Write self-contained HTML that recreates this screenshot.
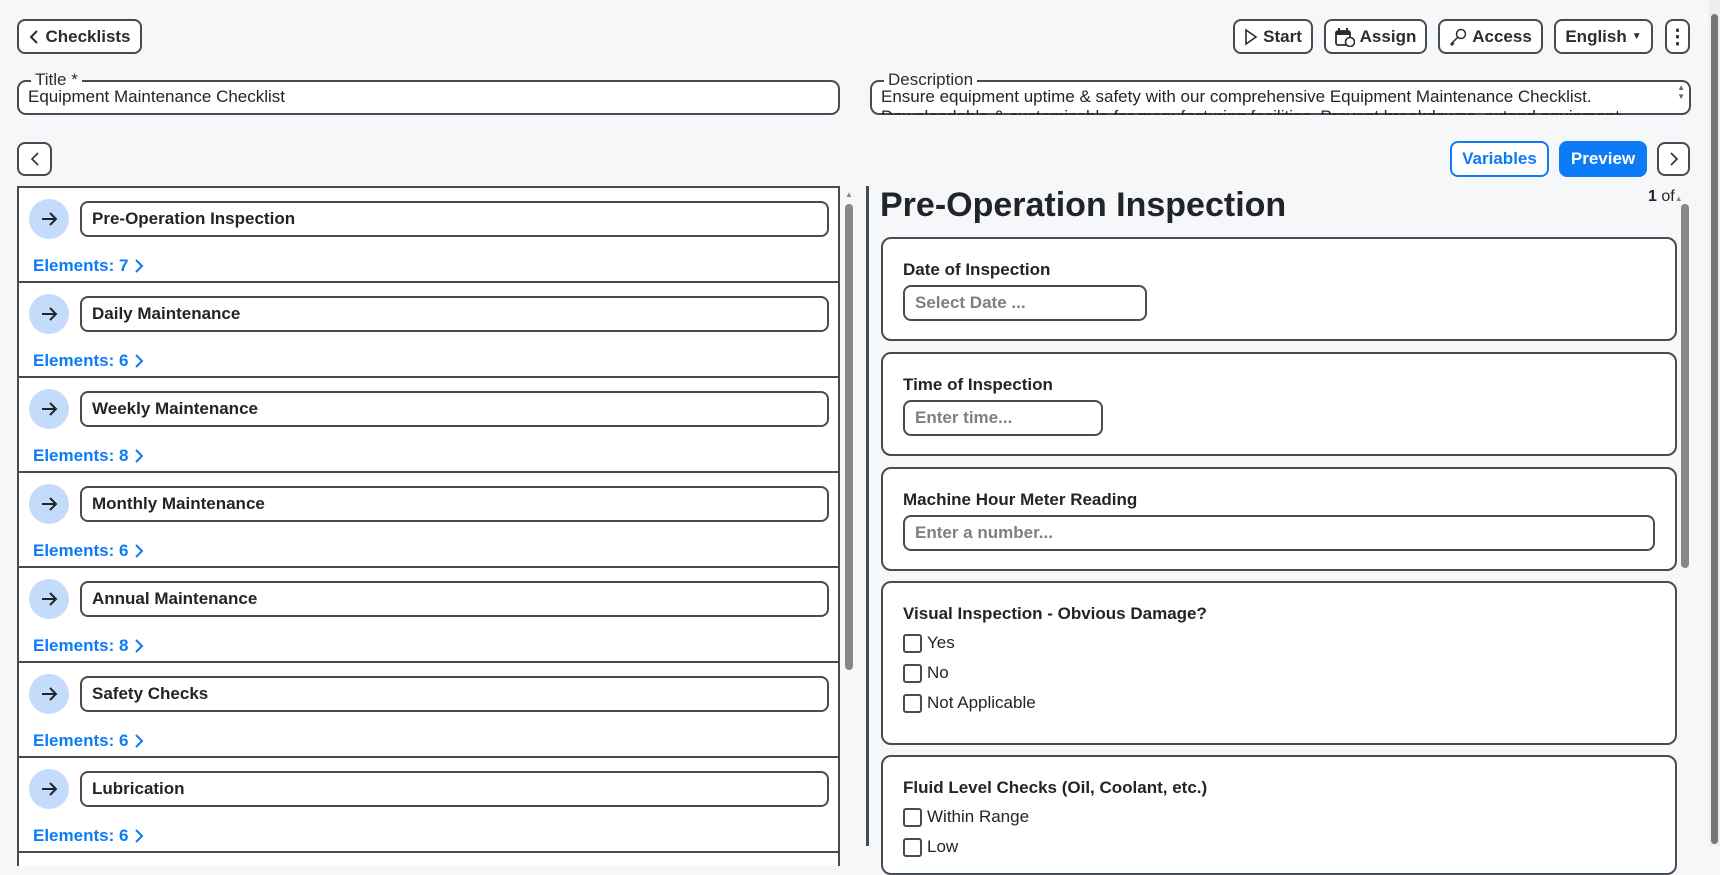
<!DOCTYPE html>
<html><head><meta charset="utf-8"><style>
*{box-sizing:border-box;margin:0;padding:0}
body{width:1720px;height:846px;overflow:hidden;background:#f6f7f9;font-family:"Liberation Sans",sans-serif;color:#212529;position:relative}
.a{position:absolute}
.btn{position:absolute;border:2px solid #474b52;border-radius:8px;background:#fff;font-weight:bold;font-size:17px;display:flex;align-items:center;justify-content:center;gap:5px;color:#2a2d31}
.fs{position:absolute;border:2px solid #474b52;border-radius:9px;background:#fff;padding:0 9px;height:35px;top:80px}
.lg{position:absolute;top:-11px;left:12px;font-size:17px;padding:0 4px;line-height:17px;background:linear-gradient(#f6f7f9 50%,#fff 50%);color:#2a2d31}
.ft{font-size:17px;line-height:20px;white-space:nowrap;overflow:hidden;margin-top:5px}
.list{position:absolute;left:17px;top:186px;width:823px;height:680px;border:2px solid #474b52;border-bottom:none;background:#fff}
.item{position:relative;height:95px;border-bottom:2px solid #474b52}
.circ{position:absolute;left:10px;top:11px;width:40px;height:40px;border-radius:50%;background:#c4dbfb;display:flex;align-items:center;justify-content:center}
.nm{position:absolute;left:61px;top:13px;width:749px;height:36px;border:2px solid #474b52;border-radius:8px;font-weight:bold;font-size:17px;padding-left:10px;line-height:32px}
.el{position:absolute;left:14px;top:68px;color:#0d7bf7;font-weight:bold;font-size:17px;display:flex;align-items:center;gap:6px}
.card{position:absolute;left:881px;width:796px;border:2px solid #474b52;border-radius:10px;background:#fff}
.lb{position:absolute;left:20px;font-weight:bold;font-size:17px}
.in{position:absolute;left:20px;height:36px;border:2px solid #474b52;border-radius:8px;color:#7b8087;font-weight:bold;font-size:17px;padding-left:10px;line-height:31px}
.cb{position:absolute;left:20px;font-size:17px;display:flex;align-items:center;gap:5px}
.cb i{display:inline-block;width:19px;height:19px;border:2px solid #474b52;border-radius:3px}
</style></head><body>
<div class="btn" style="left:17px;top:19px;width:125px;height:35px"><svg width="12" height="16" viewBox="0 0 12 16"><path d="M9 2L3 8l6 6" fill="none" stroke="#2a2d31" stroke-width="2"/></svg>Checklists</div>
<div class="btn" style="left:1233px;top:19px;width:80px;height:35px"><svg width="14" height="18" viewBox="0 0 14 18"><path d="M2 2l10 7-10 7z" fill="none" stroke="#2a2d31" stroke-width="1.6"/></svg>Start</div>
<div class="btn" style="left:1324px;top:19px;width:103px;height:35px"><svg width="20" height="20" viewBox="0 0 20 20"><rect x="1" y="4" width="14" height="14" rx="2" fill="none" stroke="#2a2d31" stroke-width="1.8"/><rect x="1" y="4" width="14" height="4" fill="#2a2d31"/><path d="M4 1v4M12 1v4" stroke="#2a2d31" stroke-width="2"/><circle cx="15" cy="15" r="4.5" fill="#fff" stroke="#2a2d31" stroke-width="1.6"/></svg>Assign</div>
<div class="btn" style="left:1438px;top:19px;width:105px;height:35px"><svg width="18" height="18" viewBox="0 0 18 18"><circle cx="12" cy="6" r="4.5" fill="none" stroke="#2a2d31" stroke-width="1.5"/><path d="M9 9L2 16l1 1 2-2" fill="none" stroke="#2a2d31" stroke-width="1.5"/></svg>Access</div>
<div class="btn" style="left:1554px;top:19px;width:99px;height:35px">English <span style="font-size:10px">▼</span></div>
<div class="btn" style="left:1665px;top:19px;width:25px;height:35px;font-size:20px">⋮</div>
<div class="a" style="left:1709px;top:0;width:11px;height:846px;background:#eee"><div style="margin:14px 2px;height:830px;background:#777;border-radius:4px"></div></div>
<div class="fs" style="left:17px;width:823px"><div class="lg">Title *</div><div class="ft">Equipment Maintenance Checklist</div></div>
<div class="fs" style="left:870px;width:821px;padding-right:40px"><div class="lg">Description</div><div class="ft" style="height:28px;white-space:normal">Ensure equipment uptime &amp; safety with our comprehensive Equipment Maintenance Checklist. Downloadable &amp; customizable for manufacturing facilities. Prevent breakdowns, extend equipment life.</div><div class="a" style="right:4px;top:1px;font-size:8px;line-height:9px;color:#666">▲<br>▼</div></div>
<div class="btn" style="left:17px;top:142px;width:35px;height:34px"><svg width="12" height="16" viewBox="0 0 12 16"><path d="M9 2L3 8l6 6" fill="none" stroke="#2a2d31" stroke-width="1.6"/></svg></div>
<div class="btn" style="left:1450px;top:141px;width:99px;height:36px;border-color:#0d7bf7;color:#0d7bf7">Variables</div>
<div class="btn" style="left:1559px;top:141px;width:88px;height:36px;border-color:#0d7bf7;background:#0d7bf7;color:#fff">Preview</div>
<div class="btn" style="left:1657px;top:142px;width:33px;height:34px"><svg width="12" height="16" viewBox="0 0 12 16"><path d="M3 2l6 6-6 6" fill="none" stroke="#2a2d31" stroke-width="1.6"/></svg></div>
<div class="list">
<div class="item"><div class="circ"><svg width="20" height="20" viewBox="0 0 20 20"><path d="M3 10h14M11 4l6 6-6 6" fill="none" stroke="#212529" stroke-width="2"/></svg></div><div class="nm">Pre-Operation Inspection</div><div class="el">Elements: 7 <svg width="10" height="16" viewBox="0 0 10 16"><path d="M2 2l6 6-6 6" fill="none" stroke="#0d7bf7" stroke-width="2"/></svg></div></div>
<div class="item"><div class="circ"><svg width="20" height="20" viewBox="0 0 20 20"><path d="M3 10h14M11 4l6 6-6 6" fill="none" stroke="#212529" stroke-width="2"/></svg></div><div class="nm">Daily Maintenance</div><div class="el">Elements: 6 <svg width="10" height="16" viewBox="0 0 10 16"><path d="M2 2l6 6-6 6" fill="none" stroke="#0d7bf7" stroke-width="2"/></svg></div></div>
<div class="item"><div class="circ"><svg width="20" height="20" viewBox="0 0 20 20"><path d="M3 10h14M11 4l6 6-6 6" fill="none" stroke="#212529" stroke-width="2"/></svg></div><div class="nm">Weekly Maintenance</div><div class="el">Elements: 8 <svg width="10" height="16" viewBox="0 0 10 16"><path d="M2 2l6 6-6 6" fill="none" stroke="#0d7bf7" stroke-width="2"/></svg></div></div>
<div class="item"><div class="circ"><svg width="20" height="20" viewBox="0 0 20 20"><path d="M3 10h14M11 4l6 6-6 6" fill="none" stroke="#212529" stroke-width="2"/></svg></div><div class="nm">Monthly Maintenance</div><div class="el">Elements: 6 <svg width="10" height="16" viewBox="0 0 10 16"><path d="M2 2l6 6-6 6" fill="none" stroke="#0d7bf7" stroke-width="2"/></svg></div></div>
<div class="item"><div class="circ"><svg width="20" height="20" viewBox="0 0 20 20"><path d="M3 10h14M11 4l6 6-6 6" fill="none" stroke="#212529" stroke-width="2"/></svg></div><div class="nm">Annual Maintenance</div><div class="el">Elements: 8 <svg width="10" height="16" viewBox="0 0 10 16"><path d="M2 2l6 6-6 6" fill="none" stroke="#0d7bf7" stroke-width="2"/></svg></div></div>
<div class="item"><div class="circ"><svg width="20" height="20" viewBox="0 0 20 20"><path d="M3 10h14M11 4l6 6-6 6" fill="none" stroke="#212529" stroke-width="2"/></svg></div><div class="nm">Safety Checks</div><div class="el">Elements: 6 <svg width="10" height="16" viewBox="0 0 10 16"><path d="M2 2l6 6-6 6" fill="none" stroke="#0d7bf7" stroke-width="2"/></svg></div></div>
<div class="item"><div class="circ"><svg width="20" height="20" viewBox="0 0 20 20"><path d="M3 10h14M11 4l6 6-6 6" fill="none" stroke="#212529" stroke-width="2"/></svg></div><div class="nm">Lubrication</div><div class="el">Elements: 6 <svg width="10" height="16" viewBox="0 0 10 16"><path d="M2 2l6 6-6 6" fill="none" stroke="#0d7bf7" stroke-width="2"/></svg></div></div>
</div>
<div class="a" style="left:845px;top:190px;font-size:8px;color:#888">▲</div>
<div class="a" style="left:845px;top:204px;width:8px;height:466px;background:#888;border-radius:4px"></div>
<div class="a" style="left:866px;top:186px;width:3px;height:660px;background:#474b52"></div>
<div class="a" style="left:880px;top:186px;font-size:34px;font-weight:bold;color:#212529">Pre-Operation Inspection</div>
<div class="a" style="left:1648px;top:188px;font-size:16px"><b>1</b> of<span style="font-size:8px;color:#888">▲</span></div>
<div class="a" style="left:1681px;top:204px;width:8px;height:364px;background:#888;border-radius:4px"></div>
<div class="card" style="top:237px;height:104px"><div class="lb" style="top:21px">Date of Inspection</div><div class="in" style="top:46px;width:244px">Select Date ...</div></div>
<div class="card" style="top:352px;height:104px"><div class="lb" style="top:21px">Time of Inspection</div><div class="in" style="top:46px;width:200px">Enter time...</div></div>
<div class="card" style="top:467px;height:104px"><div class="lb" style="top:21px">Machine Hour Meter Reading</div><div class="in" style="top:46px;width:752px">Enter a number...</div></div>
<div class="card" style="top:581px;height:164px"><div class="lb" style="top:21px">Visual Inspection - Obvious Damage?</div>
<div class="cb" style="top:50px"><i></i>Yes</div><div class="cb" style="top:80px"><i></i>No</div><div class="cb" style="top:110px"><i></i>Not Applicable</div></div>
<div class="card" style="top:755px;height:120px"><div class="lb" style="top:21px">Fluid Level Checks (Oil, Coolant, etc.)</div>
<div class="cb" style="top:50px"><i></i>Within Range</div><div class="cb" style="top:80px"><i></i>Low</div></div>
</body></html>
